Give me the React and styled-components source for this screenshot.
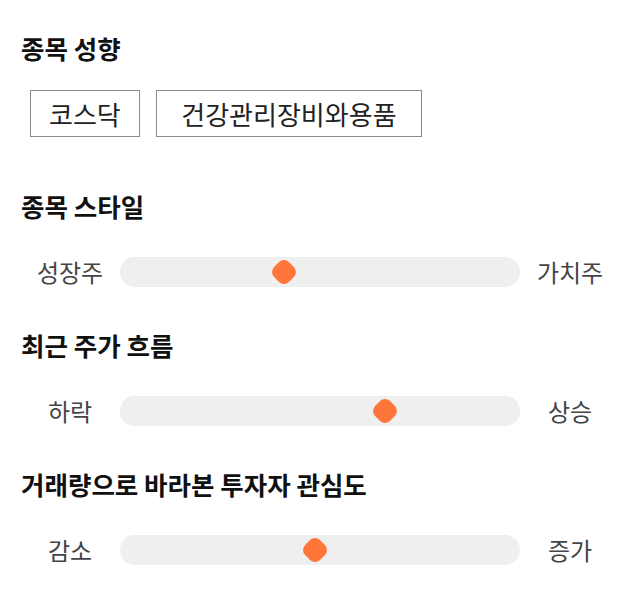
import styled, { createGlobalStyle } from "styled-components";

const GlobalStyle = createGlobalStyle`
  html, body {
    margin: 0;
    padding: 0;
    background: #fff;
  }
  body {
    font-family: "Noto Sans CJK KR", "Noto Sans", sans-serif;
    color: #222;
  }
`;

const sliders = [
  { title: "종목 스타일", left: "성장주", right: "가치주", value: 41 },
  { title: "최근 주가 흐름", left: "하락", right: "상승", value: 66.25 },
  { title: "거래량으로 바라본 투자자 관심도", left: "감소", right: "증가", value: 48.75 },
];

function App() {
  return (
    <Wrapper>
      <GlobalStyle />
      <Section>
        <Title>종목 성향</Title>
        <Chips>
          <Chip $pad={18}>코스닥</Chip>
          <Chip $pad={24.5}>건강관리장비와용품</Chip>
        </Chips>
      </Section>
      {sliders.map((s) => (
        <Section key={s.title}>
          <Title>{s.title}</Title>
          <SliderRow>
            <Label>{s.left}</Label>
            <Track>
              <Thumb style={{ left: `${s.value}%` }} />
            </Track>
            <Label>{s.right}</Label>
          </SliderRow>
        </Section>
      ))}
    </Wrapper>
  );
}

const Wrapper = styled.main`
  width: 640px;
  padding: 32px 20px 0;
  box-sizing: border-box;
  display: flex;
  flex-direction: column;
  gap: 42px;
`;

const Section = styled.section`
  display: flex;
  flex-direction: column;
`;

const Title = styled.h3`
  margin: 0 0 0 1px;
  font-size: 25.5px;
  font-weight: 700;
  line-height: 32px;
  color: #111;
`;

const Chips = styled.div`
  display: flex;
  gap: 16px;
  margin: 26px 0 11px;
  padding-left: 10px;
`;

const Chip = styled.div`
  height: 47px;
  box-sizing: border-box;
  padding: 0 ${(p) => p.$pad}px;
  border: 1px solid #8a8a8a;
  display: flex;
  align-items: center;
  font-size: 26px;
  color: #222;
`;

const SliderRow = styled.div`
  display: grid;
  grid-template-columns: 100px 1fr 100px;
  align-items: center;
  margin-top: 35px;
  height: 30px;
`;

const Label = styled.span`
  text-align: center;
  font-size: 24px;
  line-height: 30px;
  color: #444;
`;

const Track = styled.div`
  position: relative;
  height: 30px;
  background: #efefef;
  border-radius: 14px / 15px;
`;

const Thumb = styled.div`
  position: absolute;
  top: 50%;
  width: 21px;
  height: 21px;
  background: #ff763b;
  border-radius: 7px;
  transform: translate(-50%, -50%) rotate(45deg);
`;

export default App;
